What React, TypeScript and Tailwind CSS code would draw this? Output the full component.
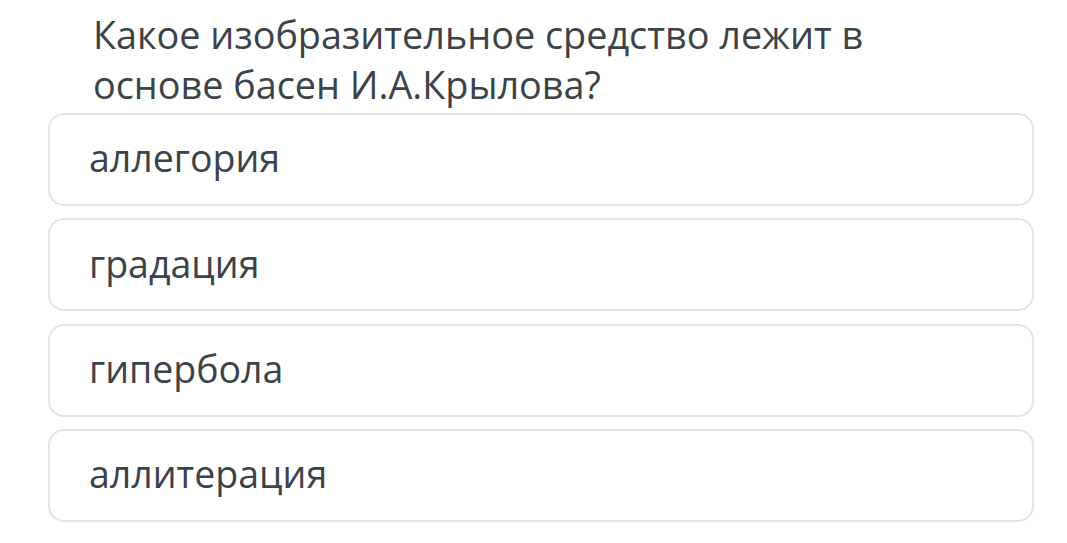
export default function App() {
  const options = ["аллегория", "градация", "гипербола", "аллитерация"];
  return (
    <div
      className="w-[1067px] h-[543px] bg-white overflow-hidden text-[#3c4348]"
      style={{ fontFamily: '"Open Sans", sans-serif' }}
    >
      <div className="h-[113px] pl-[93px] pt-[10px] text-[37.8px] leading-[50px] w-[920px]">
        Какое изобразительное средство лежит в основе басен И.А.Крылова?
      </div>
      <div className="flex flex-col gap-[12.3px] pl-[48px] pr-[33px]">
        {options.map((o) => (
          <div
            key={o}
            className="h-[93px] border-2 border-[#e4e4e4] rounded-[16px] flex items-center pl-[39px] pb-[2px] text-[37.5px]"
          >
            {o}
          </div>
        ))}
      </div>
    </div>
  );
}
